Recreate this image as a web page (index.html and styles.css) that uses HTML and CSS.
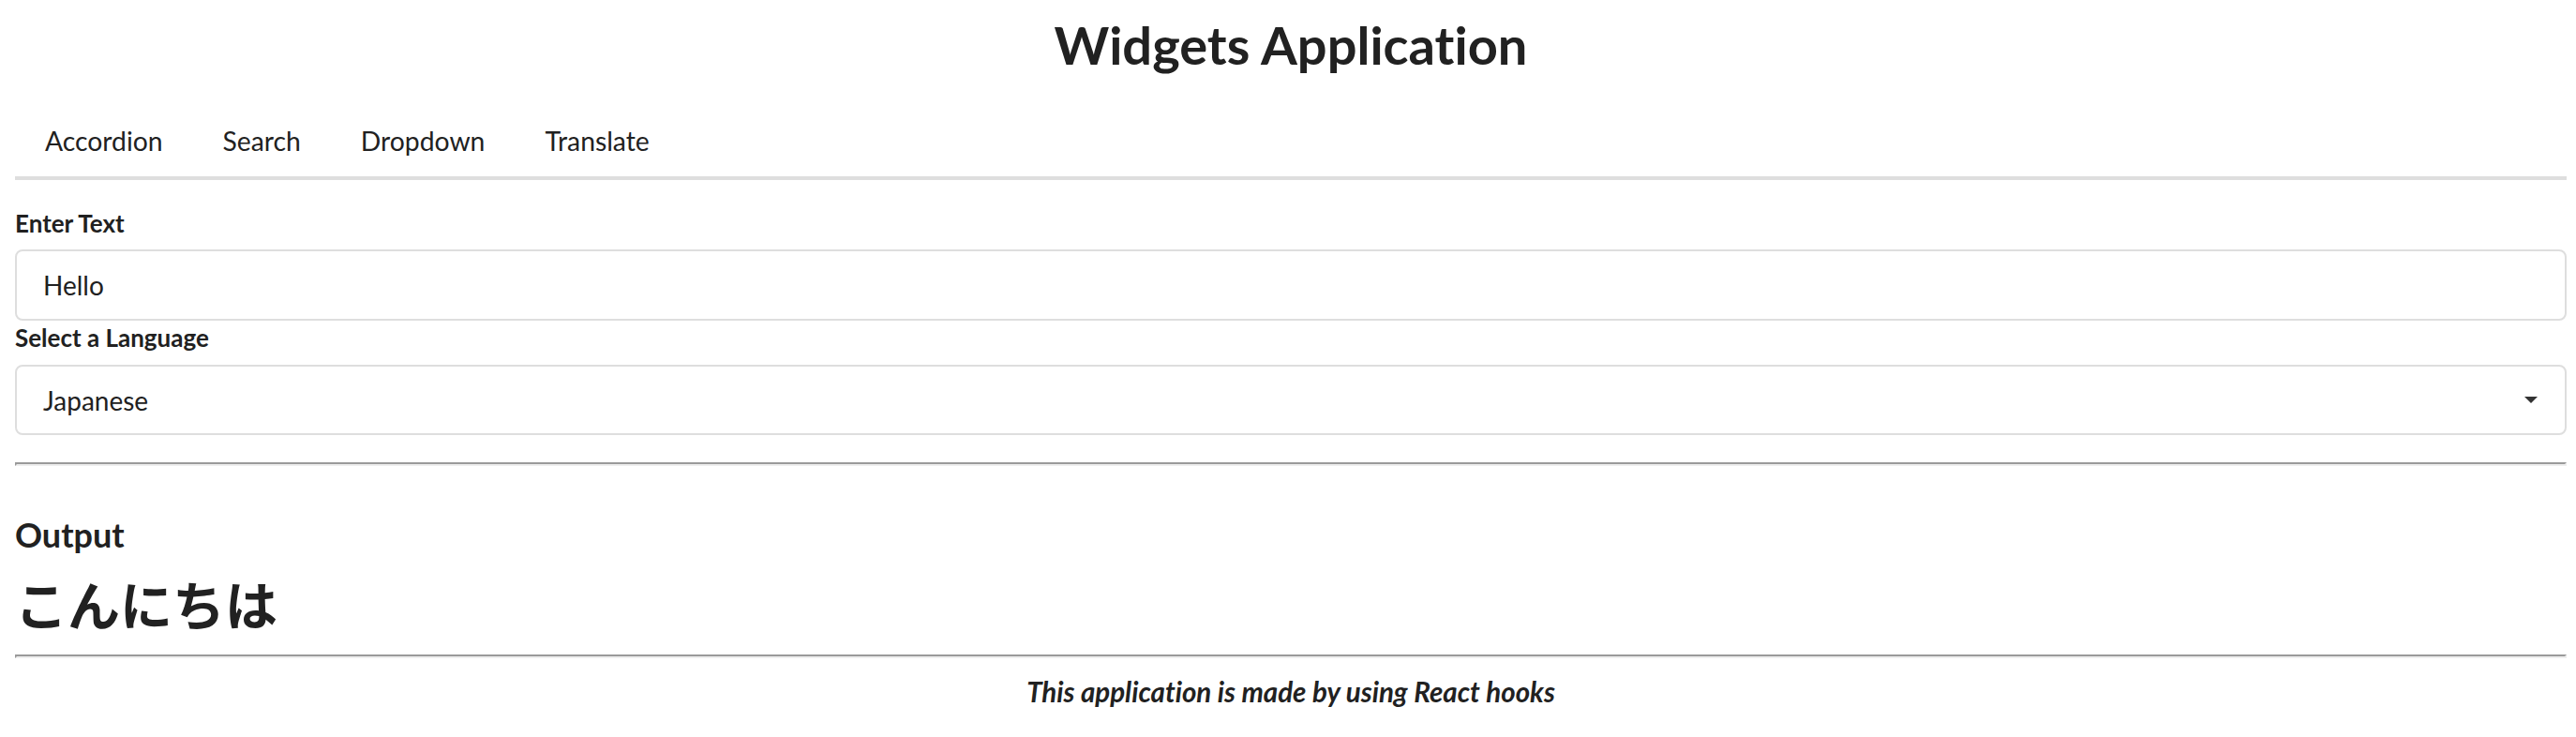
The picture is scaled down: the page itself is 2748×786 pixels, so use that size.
FILE: index.html
```html
<!DOCTYPE html>
<html lang="en">
<head>
<meta charset="utf-8">
<title>Widgets Application</title>
<link rel="stylesheet" href="styles.css">
</head>
<body>
<div class="app">
  <h1 class="title">Widgets Application</h1>
  <nav class="menu">
    <a class="item">Accordion</a>
    <a class="item">Search</a>
    <a class="item">Dropdown</a>
    <a class="item">Translate</a>
  </nav>
  <div class="form">
    <div class="field">
      <label class="label">Enter Text</label>
      <input class="input" type="text" value="Hello">
    </div>
    <div class="field">
      <label class="label">Select a Language</label>
      <div class="dropdown">
        <span class="dropdown-text">Japanese</span>
        <i class="caret"></i>
      </div>
    </div>
  </div>
  <hr class="rule rule-top">
  <h3 class="output-label">Output</h3>
  <h1 class="output" lang="ja">こんにちは</h1>
  <hr class="rule rule-bottom">
  <p class="footer">This application is made by using React hooks</p>
</div>
</body>
</html>
```

FILE: styles.css
```css
html, body {
  margin: 0;
  background: #ffffff;
}

body {
  font-family: Lato, "Noto Sans CJK JP", sans-serif;
  font-size: 28px;
  line-height: 40px;
  color: #212121;
  font-variant-ligatures: no-common-ligatures;
}

.app {
  padding: 12px 10px 0 16px;
}

.title {
  margin: 0 0 28px;
  font-size: 56px;
  line-height: 72px;
  font-weight: 700;
  text-align: center;
}

.menu {
  display: flex;
  border-bottom: 4px solid #dedede;
  margin-bottom: 28px;
}

.item {
  padding: 24px 32px;
  font-size: 28.3px;
  line-height: 28px;
  border-bottom: 4px solid transparent;
  margin-bottom: -4px;
  color: #212121;
  cursor: pointer;
}

.field {
  display: flex;
  flex-direction: column;
}

.label {
  display: block;
  font-size: 26px;
  font-weight: 700;
  line-height: 37px;
  margin-bottom: 9px;
}

.input {
  box-sizing: border-box;
  width: 100%;
  height: 76px;
  margin: 0;
  padding: 0 28px;
  border: 2px solid #dedede;
  border-radius: 8px;
  font-family: Lato, sans-serif;
  font-size: 28px;
  color: #212121;
  background: #ffffff;
  outline: none;
}

.dropdown {
  box-sizing: border-box;
  height: 75px;
  margin-top: 1px;
  display: flex;
  align-items: center;
  justify-content: space-between;
  padding: 0 29px 0 28px;
  border: 2px solid #dedede;
  border-radius: 8px;
  background: #ffffff;
}

.dropdown-text {
  line-height: 28px;
}

.caret {
  width: 0;
  height: 0;
  border-left: 7px solid transparent;
  border-right: 7px solid transparent;
  border-top: 7px solid #333333;
}

.rule {
  height: 0;
  border-style: solid;
  border-width: 2px;
  border-color: #9a9a9a #eeeeee #eeeeee #9a9a9a;
}

.rule-top {
  margin: 29px 0 0;
}

.output-label {
  margin: 50px 0 0;
  font-size: 36px;
  line-height: 46px;
  font-weight: 700;
}

.output {
  margin: 14px 0 0;
  font-family: "Noto Sans CJK JP", sans-serif;
  font-size: 56px;
  line-height: 72px;
  font-weight: 700;
}

.rule-bottom {
  margin: 19px 0 0;
}

.footer {
  margin: 16px 0 0;
  text-align: center;
  font-style: italic;
  font-weight: 700;
  font-size: 29.5px;
}
```
